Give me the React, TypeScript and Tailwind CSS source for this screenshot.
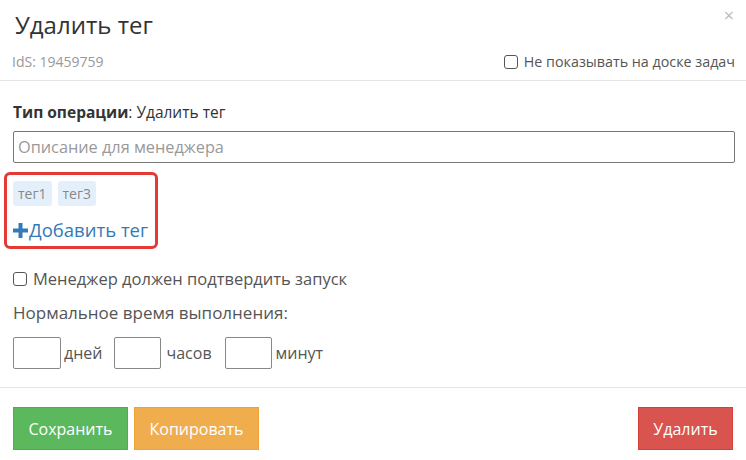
import React from "react";

export default function App() {
  const font = { fontFamily: '"Open Sans", "Liberation Sans", Arial, sans-serif' };
  return (
    <div className="w-[746px] h-[460px] bg-white text-[#333] overflow-hidden" style={font}>
      {/* header */}
      <div className="relative px-[15px] pt-[10px] pb-[10px] border-b border-[#e5e5e5] h-[81px]">
        <div className="text-[24px] leading-[30px] text-[#333]">Удалить тег</div>
        <button className="absolute right-[12px] top-[6px] text-[#bbb] text-[18px] leading-none">×</button>
        <div className="flex items-center justify-between mt-[11px]">
          <span className="text-[14px] text-[#999] -ml-[3px]">IdS: 19459759</span>
          <label className="flex items-center gap-[6px] text-[14.3px] text-[#555] -mr-[4px]">
            <span className="w-[14px] h-[14px] border border-[#555] rounded-[3px] inline-block" />
            Не показывать на доске задач
          </label>
        </div>
      </div>

      {/* body */}
      <div className="px-[13px] pt-[21px] h-[307px] border-b border-[#e5e5e5]">
        <div className="text-[15.5px] leading-[20px]">
          <b>Тип операции</b>: Удалить тег
        </div>
        <div className="mt-[9px] h-[32px] w-[722px] border border-[#777] rounded-[2px] flex items-center px-[4px] text-[16.3px] text-[#999]">
          Описание для менеджера
        </div>
        <div className="mt-[9px] -ml-[9px] w-[154px] h-[77px] border-[3px] border-[#e53935] rounded-[6px] pt-[6px] pl-[6px]">
          <div className="flex gap-[6px]">
            <span className="bg-[#e3f0fb] text-[#888] text-[14px] px-[5px] h-[25px] leading-[25px] rounded-[3px]">тег1</span>
            <span className="bg-[#e3f0fb] text-[#888] text-[14px] px-[5px] h-[25px] leading-[25px] rounded-[3px]">тег3</span>
          </div>
          <div className="mt-[13px] flex items-center text-[18.5px] leading-[22px] text-[#337ab7]">
            <svg width="15" height="15" viewBox="0 0 15 15" className="mr-[1px]">
              <rect x="5.5" y="0" width="4" height="15" fill="#337ab7" />
              <rect x="0" y="5.5" width="15" height="4" fill="#337ab7" />
            </svg>
            Добавить тег
          </div>
        </div>
        <label className="mt-[19px] flex items-center gap-[6px] text-[16.5px] leading-[22px] text-[#555]">
          <span className="w-[14px] h-[14px] border border-[#555] rounded-[3px] inline-block" />
          Менеджер должен подтвердить запуск
        </label>
        <div className="mt-[11px] text-[17px] leading-[24px] text-[#555]">Нормальное время выполнения:</div>
        <div className="mt-[12px] flex items-center text-[16px] text-[#555]">
          <span className="w-[48px] h-[32px] border border-[#888] rounded-[2px]" />
          <span className="ml-[3px]">дней</span>
          <span className="ml-[12px] w-[47px] h-[32px] border border-[#888] rounded-[2px]" />
          <span className="ml-[5px]">часов</span>
          <span className="ml-[13px] w-[47px] h-[32px] border border-[#888] rounded-[2px]" />
          <span className="ml-[4px]">минут</span>
        </div>
      </div>

      {/* footer */}
      <div className="flex items-center px-[13px] pt-[19px]">
        <button className="h-[43px] w-[115px] bg-[#5cb85c] border border-[#4cae4c] text-white text-[16px]">Сохранить</button>
        <button className="ml-[6px] h-[43px] w-[125px] bg-[#f0ad4e] border border-[#eea236] text-white text-[16px]">Копировать</button>
        <button className="ml-auto h-[43px] w-[95px] bg-[#d9534f] border border-[#d43f3a] text-white text-[16px]">Удалить</button>
      </div>
    </div>
  );
}
